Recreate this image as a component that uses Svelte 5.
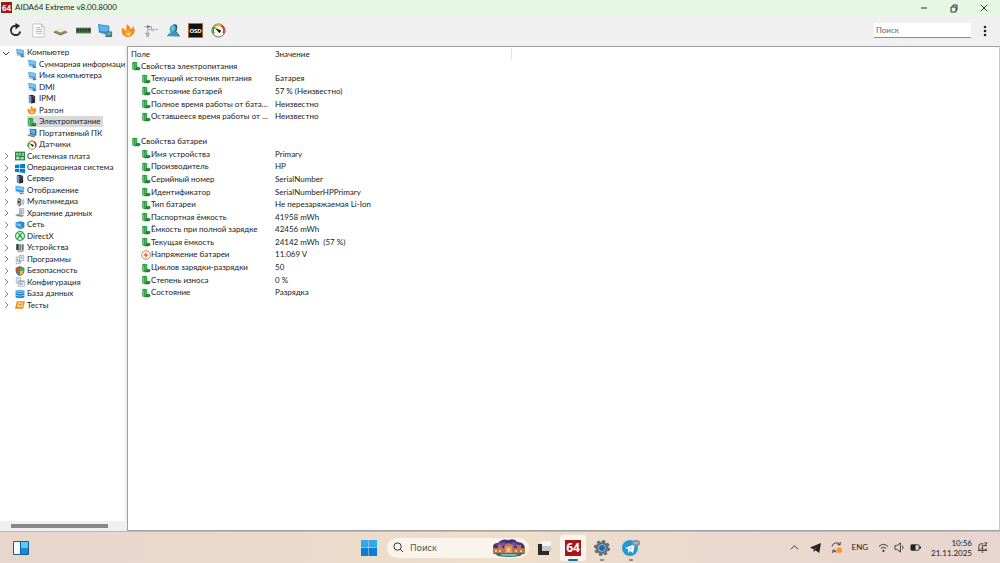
<script>
  const tree = [
    { icon: 'pc', label: 'Компьютер', level: 0, open: true },
    { icon: 'pc', label: 'Суммарная информаци', level: 1 },
    { icon: 'pc', label: 'Имя компьютера', level: 1 },
    { icon: 'pc', label: 'DMI', level: 1 },
    { icon: 'server', label: 'IPMI', level: 1 },
    { icon: 'flame', label: 'Разгон', level: 1 },
    { icon: 'battery', label: 'Электропитание', level: 1, selected: true },
    { icon: 'laptop', label: 'Портативный ПК', level: 1 },
    { icon: 'gauge', label: 'Датчики', level: 1 },
    { icon: 'board', label: 'Системная плата', level: 0 },
    { icon: 'windows', label: 'Операционная система', level: 0 },
    { icon: 'server', label: 'Сервер', level: 0 },
    { icon: 'display', label: 'Отображение', level: 0 },
    { icon: 'sound', label: 'Мультимедиа', level: 0 },
    { icon: 'disk', label: 'Хранение данных', level: 0 },
    { icon: 'network', label: 'Сеть', level: 0 },
    { icon: 'directx', label: 'DirectX', level: 0 },
    { icon: 'devices', label: 'Устройства', level: 0 },
    { icon: 'programs', label: 'Программы', level: 0 },
    { icon: 'shield', label: 'Безопасность', level: 0 },
    { icon: 'config', label: 'Конфигурация', level: 0 },
    { icon: 'database', label: 'База данных', level: 0 },
    { icon: 'tests', label: 'Тесты', level: 0 }
  ];

  const rows = [
    { group: 'Свойства электропитания' },
    { name: 'Текущий источник питания', value: 'Батарея' },
    { name: 'Состояние батарей', value: '57 % (Неизвестно)' },
    { name: 'Полное время работы от бата...', value: 'Неизвестно' },
    { name: 'Оставшееся время работы от ...', value: 'Неизвестно' },
    { blank: true },
    { group: 'Свойства батареи' },
    { name: 'Имя устройства', value: 'Primary' },
    { name: 'Производитель', value: 'HP' },
    { name: 'Серийный номер', value: 'SerialNumber' },
    { name: 'Идентификатор', value: 'SerialNumberHPPrimary' },
    { name: 'Тип батареи', value: 'Не перезаряжаемая Li-Ion' },
    { name: 'Паспортная ёмкость', value: '41958 mWh' },
    { name: 'Ёмкость при полной зарядке', value: '42456 mWh' },
    { name: 'Текущая ёмкость', value: '24142 mWh\u00a0 (57 %)' },
    { name: 'Напряжение батареи', value: '11.069 V', icon: 'volt' },
    { name: 'Циклов зарядки-разрядки', value: '50' },
    { name: 'Степень износа', value: '0 %' },
    { name: 'Состояние', value: 'Разрядка' }
  ];

  const tools = [
    { icon: 'refresh', label: 'Обновить' },
    { icon: 'report', label: 'Отчёт' },
    { icon: 'chip', label: 'Процессор' },
    { icon: 'ram', label: 'Память' },
    { icon: 'remote', label: 'Монитор' },
    { icon: 'flame', label: 'Разгон' },
    { icon: 'prefs', label: 'Настройки' },
    { icon: 'user', label: 'Пользователь' },
    { icon: 'osd', label: 'Панель OSD' },
    { icon: 'gauge', label: 'Датчики' }
  ];

  let search = $state('');
  let query = $state('');
</script>

{#snippet icon(name)}
  <svg class="icon" viewBox="0 0 16 16" aria-hidden="true">
    {#if name === 'pc'}
      <path d="M2 1l12 2v9L3 10z" fill="#3b97da" />
      <path d="M3 2l10 2v5L4 8z" fill="#7cc4f2" />
      <path d="M0 11l5-1 8 2-3 2z" fill="#b9c6cf" />
      <path d="M9 11l6 1v2l-5 1z" fill="#3c7fb5" />
    {:else if name === 'laptop'}
      <path d="M4 1l11 1v10L5 10z" fill="#1b5fa8" />
      <path d="M5 2l8 1v7L6 8z" fill="#5cb6f0" />
      <path d="M1 11l4-2 10 2-3 3z" fill="#8a949c" />
      <path d="M1 11l11 3v1L1 12z" fill="#39434b" />
    {:else if name === 'display'}
      <path d="M1 1l13 2v9L1 10z" fill="#2490df" />
      <path d="M2 2l11 2v5L2 7z" fill="#79caf7" />
      <path d="M6 12l5 0 4 2-6 1z" fill="#7a8c9c" />
    {:else if name === 'remote'}
      <path d="M0 1l12 2v10L1 10z" fill="#2f8fdc" />
      <path d="M1 2l10 2v6L2 8z" fill="#5db4ee" />
      <path d="M8 9h7v6H8z" fill="#4d7185" />
      <path d="M9 10h5v3H9z" fill="#62a9a1" />
    {:else if name === 'server'}
      <path d="M3 2l5-1 5 2v11l-6 1-4-2z" fill="#252a32" />
      <path d="M3 2l4 1v12l-4-2z" fill="#7998b8" />
      <path d="M9 4h3M9 6h3M9 8h3" stroke="#69717e" />
    {:else if name === 'flame'}
      <path d="M1 5c2 1 3 2 4 4 1-3 1-5 1-8 3 2 4 4 4 6l4-4c-1 3 0 4 1 4-1 6-4 8-8 8-5-1-7-4-6-10z" fill="#f28c1c" />
      <path d="M4 10c2 1 3-1 4-4 0 3 1 4 4 3-1 5-7 6-8 1z" fill="#ffb23a" />
      <path d="M6 12l2-2 2 2-2 2z" fill="#ffe083" />
    {:else if name === 'battery'}
      <path d="M2 2l3-1 5 1v12l-3 1-5-2z" fill="#2a9741" />
      <path d="M3 3l2 1v10l-2-1z" fill="#5fce6c" />
      <path d="M6 3h3v9H6z" fill="#45b858" />
      <path d="M8 10l5-1 2 2v2l-4 2-3-1z" fill="#286f38" />
      <path d="M10 10h3v2h-3z" fill="#45a552" />
    {:else if name === 'gauge'}
      <circle cx="8" cy="8" r="7" fill="#fffbea" stroke="#5b6652" stroke-width="1" />
      <path d="M3 11A6 6 0 0 1 4 4" stroke="#37a53a" stroke-width="2" fill="none" />
      <path d="M4 4a6 6 0 0 1 7-1" stroke="#e9b51d" stroke-width="2" fill="none" />
      <path d="M11 3a6 6 0 0 1 2 8" stroke="#d63b25" stroke-width="2" fill="none" />
      <path d="M4 5l7 3-2 3z" fill="#222" />
    {:else if name === 'board'}
      <path d="M0 1h16v14H0z" fill="#268a42" />
      <path d="M2 3h3v4H2zM6 3h3v4H6zM11 3h3v5h-3zM2 9h5v4H2zM9 10h5v3H9z" fill="#c4e8c8" />
      <path d="M3 4v2M7 4v2M12 4v3" stroke="#268a42" />
    {:else if name === 'windows'}
      <path d="M0 3l7-1v6H0zM8 2l8-1v7H8zM0 9h7v6l-7-1zM8 9h8v7l-8-1z" fill="#087bd0" />
    {:else if name === 'sound'}
      <path d="M4 3l3-2 3 3v8l-3 3-3-3z" fill="#575d61" />
      <ellipse cx="6" cy="8" rx="3" ry="5" fill="#b4b9bc" />
      <circle cx="6" cy="8" r="2" fill="#444" />
      <path d="M11 4q3 4 0 8M13 3q3 5 0 10" fill="none" stroke="#888" />
    {:else if name === 'disk'}
      <path d="M7 1h7v8H7z" fill="#d9dee1" stroke="#8c9499" />
      <path d="M0 11l5-2 10 2-3 3-9-1z" fill="#a4abb0" />
      <path d="M3 12l9 1M9 3l2 3-3 2" stroke="#566067" fill="none" />
    {:else if name === 'network'}
      <path d="M1 4l8-2 6 2v8l-7 2-7-3z" fill="#238ace" />
      <path d="M2 5l8 1v5l-8-2z" fill="#6bc2f1" />
      <path d="M5 13l7-2 2 2-7 2z" fill="#7b929d" />
    {:else if name === 'directx'}
      <circle cx="8" cy="8" r="7" fill="white" stroke="#20a23c" stroke-width="2" />
      <path d="M4 13Q5 9 8 7q3 2 4 6M4 4q3 0 4 3 1-3 4-3" stroke="#20a23c" stroke-width="2" fill="none" />
    {:else if name === 'devices'}
      <path d="M2 2l4-1v11l-4-1z" fill="#333b40" />
      <path d="M7 2h3v9H7zM11 2h3v9h-3z" fill="#6c757a" />
      <path d="M3 12l10-1 1 3-8 1z" fill="#a8afb3" />
    {:else if name === 'programs'}
      <path d="M2 5h7v10H2z" fill="#fff" stroke="#718fa5" />
      <path d="M7 2h7v9H7z" fill="#e9f3f9" stroke="#7494aa" />
      <path d="M3 7h2v5H3z" fill="#e7ad23" />
      <path d="M6 9h2v4H6z" fill="#3b97d3" />
      <path d="M9 5h3M9 7h3" stroke="#52809b" />
    {:else if name === 'shield'}
      <path d="M8 0l7 3v5q-1 6-7 8-6-2-7-8V3z" fill="#546068" />
      <path d="M2 4l6-3v7H2z" fill="#e24b2e" />
      <path d="M8 1l6 3v4H8z" fill="#4faf45" />
      <path d="M2 8h6v7q-5-2-6-7z" fill="#288bd5" />
      <path d="M8 8h6q-1 5-6 7z" fill="#f5be30" />
    {:else if name === 'config'}
      <path d="M2 1h7v9H2zM5 6h10v9H5z" fill="#eaf0f3" stroke="#93a2ac" />
      <path d="M5 6h10v2H5z" fill="#99afbf" />
      <path d="M7 10h6M7 12h5M4 3h3" stroke="#879eaf" />
    {:else if name === 'database'}
      <path d="M1 3q7-3 14 0v10q-7 3-14 0z" fill="#1681cf" />
      <ellipse cx="8" cy="3" rx="7" ry="2" fill="#65baf0" />
      <path d="M1 6q7 3 14 0M1 10q7 3 14 0" stroke="#def1fb" stroke-width="1" fill="none" />
    {:else if name === 'tests'}
      <path d="M3 2h13l-3 12H0z" fill="#e89218" />
      <path d="M5 4h8l-1 7H4z" fill="#ffe0a3" />
      <path d="M6 9l2-3 1 3 2-4" stroke="#bd650b" fill="none" />
    {:else if name === 'volt'}
      <circle cx="8" cy="8" r="7" fill="#fff4eb" stroke="#a9532f" stroke-width="1" />
      <path d="M10 2L4 9h4l-2 5 6-7H8z" fill="#df5824" />
    {:else if name === 'refresh'}
      <path d="M9 3A5 5 0 1 0 13 9" fill="none" stroke="#252525" stroke-width="2" />
      <path d="M8 0l5 3-5 4z" fill="#252525" />
    {:else if name === 'report'}
      <path d="M2 1h9l3 3v11H2z" fill="#fff" stroke="#bfc2c4" />
      <path d="M11 1v3h3M5 5h5M5 7h7M5 9h7M5 11h7" fill="none" stroke="#b3b7ba" />
    {:else if name === 'chip'}
      <path d="M1 9l7 3 7-3v1l-7 3-7-3z" fill="#514d30" />
      <path d="M1 9l7-3 7 3-7 3z" fill="#8f8b65" />
      <path d="M3 8l5-2 5 2-5 2z" fill="#eeeede" />
    {:else if name === 'ram'}
      <path d="M0 5h16v6H0z" fill="#47704c" />
      <path d="M1 6h2v3H1zM4 6h2v3H4zM7 6h2v3H7zM10 6h2v3h-2zM13 6h2v3h-2z" fill="#263a2b" />
      <path d="M1 11h14" stroke="#b5ac68" stroke-dasharray="1 1" />
    {:else if name === 'prefs'}
      <path d="M5 2v13M1 4h8M5 7h11M9 3v5M2 11h5" stroke="#a1acb5" fill="none" />
      <path d="M4 3h3v2H4z" fill="#4a7e9d" />
      <path d="M10 6h2v3h-2z" fill="#bdc4c9" />
      <path d="M4 11h2v3H4z" fill="#d4dade" stroke="#8e9aa4" />
    {:else if name === 'user'}
      <path d="M7 2q5-2 5 3l-1 4 4 5H8z" fill="#1b4a66" />
      <path d="M4 7q0-4 3-5t4 3l-1 4 3 3v2H1q1-3 4-4z" fill="#359cba" />
      <path d="M6 4q3-2 3 1t-3 4z" fill="#78c6d8" />
    {:else if name === 'osd'}
      <path d="M0 0h16v16H0z" fill="#15100e" stroke="#b9702a" stroke-width="2" />
      <text x="8" y="11" text-anchor="middle" font-size="6" font-weight="800" fill="#fff">OSD</text>
    {/if}
  </svg>
{/snippet}

<div class="desktop">
  <header class="titlebar">
    <span class="logo">64</span>
    <h1>AIDA64 Extreme v8.00.8000</h1>
    <div class="window-buttons">
      <button aria-label="Свернуть"><svg viewBox="0 0 10 10"><path d="M2 5h6" /></svg></button>
      <button aria-label="Восстановить"><svg viewBox="0 0 10 10"><path d="M2 4h5v5H2zM4 4V2h4v5H7" /></svg></button>
      <button aria-label="Закрыть"><svg viewBox="0 0 10 10"><path d="M2 2l6 6M8 2L2 8" /></svg></button>
    </div>
  </header>

  <div class="toolbar">
    <div class="tools">
      {#each tools as tool}
        <button aria-label={tool.label}>{@render icon(tool.icon)}</button>
      {/each}
    </div>
    <input type="search" placeholder="Поиск" aria-label="Поиск" bind:value={search} />
    <button class="more" aria-label="Меню">
      <svg viewBox="0 0 4 12"><circle cx="2" cy="2" r="1.300" /><circle cx="2" cy="6" r="1.300" /><circle cx="2" cy="10" r="1.300" /></svg>
    </button>
  </div>

  <main>
    <nav aria-label="Разделы">
      <ul>
        {#each tree as item}
          <li class:child={item.level === 1}>
            <button class="node" class:selected={item.selected}>
              {#if item.level === 0}
                <svg class="chevron" class:open={item.open} viewBox="0 0 8 8" aria-hidden="true"><path d="M3 1l3 3-3 3" /></svg>
              {/if}
              {@render icon(item.icon)}
              <span>{item.label}</span>
            </button>
          </li>
        {/each}
      </ul>
      <div class="scrollbar"><div class="thumb"></div></div>
    </nav>

    <section>
      <table>
        <colgroup><col class="field-col" /><col class="value-col" /><col /></colgroup>
        <thead>
          <tr><th scope="col">Поле</th><th scope="col">Значение</th><td></td></tr>
        </thead>
        <tbody>
          {#each rows as row}
            <tr>
              {#if row.blank}
                <td colspan="3"></td>
              {:else if row.group}
                <th scope="rowgroup" colspan="3"><div class="cell">{@render icon('battery')}{row.group}</div></th>
              {:else}
                <td><div class="cell indent">{@render icon(row.icon ?? 'battery')}{row.name}</div></td>
                <td>{row.value}</td>
                <td></td>
              {/if}
            </tr>
          {/each}
        </tbody>
      </table>
    </section>
  </main>

  <footer>
    <div class="left">
      <button aria-label="Мини-приложения">
        <svg class="widgets" viewBox="0 0 16 16"><rect x="0" y="1" width="16" height="14" rx="1" fill="#155e9c" /><path d="M1 2h6v12H1z" fill="#f5fbff" /><path d="M8 2h7v6H8z" fill="#55cdf8" /><path d="M8 8h7v6H8z" fill="#168bd8" /></svg>
      </button>
    </div>
    <div class="apps">
      <button aria-label="Пуск">
        <svg class="start" viewBox="0 0 16 16"><path d="M0 0h7.500v7.500H0zM8 0h8v7.500H8z" fill="#2ea9ec" /><path d="M0 8h7.500v8H0zM8 8h8v8H8z" fill="#0b7dd4" /></svg>
      </button>
      <div class="search">
        <svg class="lens" viewBox="0 0 12 12"><circle cx="5" cy="5" r="4" /><path d="M8 8l3 3" /></svg>
        <input type="text" placeholder="Поиск" aria-label="Поиск в системе" bind:value={query} />
        <svg class="scene" viewBox="0 0 34 18" aria-hidden="true">
          <path d="M1 8q0-4 5-4 4-5 10-3 7-2 9 2 8 0 8 7L32 13H2z" fill="#49306f" />
          <path d="M4 6q5-4 9-2t9-1l6 4-10 1z" fill="#76519a" />
          <path d="M1 9h5V6h4v3h2l1-3 3-2 5 2 1 3h3V6h4v3h4v6H1z" fill="#ba7554" />
          <path d="M13 7h7v7h-7z" fill="#d9966a" />
          <path d="M3 11h2v2H3zM7 11h2v2H7zM15 9h3v4h-3zM23 11h2v2h-2zM28 11h2v2h-2z" fill="#f3cd74" />
          <path d="M2 14h30l-4 3q-11 2-22 0z" fill="#38716c" />
          <path d="M8 15h18l-3 2H11z" fill="#70b6c5" />
        </svg>
      </div>
      <button aria-label="Представление задач">
        <svg class="start" viewBox="0 0 16 16"><path d="M5 1h10v11H5z" fill="#c6c9cb" /><path d="M5 1h10v5H5z" fill="#f3f3f3" /><path d="M2 4h4v7h7v4H2z" fill="#292929" /></svg>
      </button>
      <button class="app active" aria-label="AIDA64"><span class="logo large">64</span></button>
      <button class="app running" aria-label="Параметры">
        <svg class="start" viewBox="0 0 16 16"><circle cx="8" cy="8" r="7" fill="none" stroke="#58636c" stroke-width="2" stroke-dasharray="3 2.500" /><circle cx="8" cy="8" r="5" fill="#dce5ed" stroke="#65717c" stroke-width="3" /><circle cx="8" cy="8" r="3" fill="#176dba" /></svg>
      </button>
      <button class="app running" aria-label="Telegram">
        <svg class="telegram" viewBox="0 0 18 16"><circle cx="8" cy="8" r="8" fill="#209bd9" /><path d="M3 8l10-4-2 9-3-2-2 2V9z" fill="#fff" /><path d="M7 9l4-3-3 4z" fill="#8fc9e9" /><rect x="10" y="0" width="8" height="6" rx="3" fill="#8c9297" /><path d="M12 3h4" stroke="#d7dbdd" /></svg>
      </button>
    </div>
    <div class="tray">
      <button aria-label="Скрытые значки"><svg class="small" viewBox="0 0 12 12"><path d="M2 8l4-4 4 4" /></svg></button>
      <button aria-label="Сообщения"><svg class="small" viewBox="0 0 12 12"><path d="M0 6l12-5-2 11-4-3-2 2V8z" fill="#202020" stroke="none" /><path d="M4 8l5-4-4 4z" fill="#b5a7a0" stroke="none" /></svg></button>
      <button aria-label="Обновление"><svg class="small" viewBox="0 0 12 12"><path d="M1 5a5 5 0 0 1 9-2M10 0v3H7M2 12V9h3M3 10l3 1" /><circle cx="9" cy="9" r="3" fill="#f49b22" stroke="none" /></svg></button>
      <button class="lang">ENG</button>
      <button class="status" aria-label="Сеть, звук и батарея">
        <svg class="small" viewBox="0 0 12 12"><path d="M1 5q5-5 10 0M3 7q3-3 6 0M5 9q1-1 2 0" /><circle cx="6" cy="10" r="1" fill="#333" stroke="none" /></svg>
        <svg class="small" viewBox="0 0 12 12"><path d="M1 4h2l4-3v10L3 8H1zM9 4q2 2 0 4" /></svg>
        <svg class="small" viewBox="0 0 12 12"><rect x="1" y="3" width="9" height="6" rx="1" /><path d="M1 3h5v6H1zM10 5h2v2h-2z" fill="#222" stroke="none" /></svg>
      </button>
      <button class="clock"><time>10:56</time><span>21.11.2025</span></button>
      <button aria-label="Уведомления"><svg class="small" viewBox="0 0 12 12"><path d="M7 2H4Q2 2 2 5v4h8V7M1 9h10M5 11h2M5 4h2L5 7h2M8 1h3L8 4h3" /></svg></button>
    </div>
  </footer>
</div>

<style>
  :global(body) { margin: 0; }
  * { box-sizing: border-box; }
  button, input { font: inherit; color: inherit; border: 0; padding: 0; background: none; }
  button { display: flex; align-items: center; justify-content: center; }
  svg { display: block; flex: none; }

  .desktop {
    display: flex;
    flex-direction: column;
    min-height: 100vh;
    background: #f0f0f0;
    color: #222;
    font: 8px/11px Lato, "Noto Sans", sans-serif;
  }
  .icon { width: 10px; height: 10px; }

  .titlebar { display: flex; align-items: center; gap: 3px; height: 15px; padding-right: 1px; background: #e6f7e4; }
  .logo {
    display: grid;
    place-items: center;
    width: 11px;
    height: 11px;
    margin-left: 1px;
    background: #a3161b;
    color: #fff;
    font-family: "Open Sans", sans-serif;
    font-size: 8px;
    font-weight: 700;
  }
  .logo.large { width: 16px; height: 16px; margin: 0; font-size: 12px; }
  h1 { flex: 1; margin: 0; font-size: 8px; font-weight: 400; }
  .window-buttons { display: flex; }
  .window-buttons button { width: 30px; height: 15px; }
  .window-buttons svg { width: 10px; height: 10px; fill: none; stroke: #333; }

  .toolbar { display: flex; align-items: center; height: 31px; padding: 0 9px 0 4px; }
  .tools { display: flex; flex: 1; }
  .tools button { width: 23px; height: 22px; }
  .tools button:nth-child(2n) { width: 22px; }
  .tools .icon { width: 15px; height: 15px; }
  .toolbar input {
    width: 97px;
    height: 15px;
    padding: 0 2px;
    background: #fff;
    border-bottom: 1px solid #8c8c8c;
  }
  .toolbar input::placeholder { color: #666; opacity: 1; }
  .more { width: 12px; height: 18px; margin-left: 8px; }
  .more svg { width: 4px; height: 12px; fill: #222; }

  main { display: flex; flex: 1; }
  nav { display: flex; flex-direction: column; width: 125px; background: #fff; }
  ul { display: grid; grid-auto-rows: 1fr; height: 264px; margin: 1px 0 auto; padding: 0; list-style: none; overflow: hidden; }
  li { display: flex; align-items: center; min-height: 0; padding-left: 2px; overflow: hidden; }
  li.child { padding-left: 27px; }
  .node { gap: 2px; height: 11px; white-space: nowrap; }
  .node span { padding-right: 2px; }
  .selected { background: #d9d9d9; }
  .chevron { width: 8px; height: 8px; margin-right: 3px; fill: none; stroke: #888; }
  .chevron.open { transform: rotate(90deg); stroke: #333; }
  .scrollbar { height: 10px; padding: 3px 17px 3px 11px; background: #f0f0f0; }
  .thumb { height: 4px; background: #888; }

  section { flex: 1; margin-left: 2px; background: #fff; border: 1px solid #a0a0a0; border-right-color: #c8c8c8; }
  table { width: 100%; height: 251px; margin-top: 1px; table-layout: fixed; border-collapse: collapse; }
  .field-col { width: 144px; }
  .value-col { width: 239px; }
  th, td { height: 12px; padding: 0 3px; text-align: left; font-weight: 400; white-space: nowrap; vertical-align: middle; }
  thead th:nth-child(2) { border-right: 1px solid #e2e2e2; }
  .cell { display: flex; align-items: center; }
  .indent { padding-left: 10px; }

  footer {
    display: grid;
    grid-template-columns: 1fr auto 1fr;
    align-items: center;
    height: 32px;
    border-top: 1px solid #c4b8b0;
    background: linear-gradient(90deg, #e7d6cc, #eadacc 30%, #efdfca 50%, #ead9ce 70%, #e8d5cf);
  }
  .left { display: flex; padding-left: 13px; }
  .widgets, .start { width: 16px; height: 16px; }
  .apps { display: flex; align-items: center; }
  .apps > button { width: 26px; height: 26px; }
  .search {
    display: flex;
    align-items: center;
    gap: 6px;
    width: 142px;
    height: 20px;
    margin: 0 2px 0 5px;
    padding: 0 3px 0 6px;
    border-radius: 10px;
    background: #faf4ed;
  }
  .search input { flex: 1; min-width: 0; font-family: "Noto Sans", sans-serif; font-size: 9px; }
  .search input::placeholder { color: #555; opacity: 1; }
  .lens { width: 11px; height: 11px; fill: none; stroke: #222; }
  .scene { width: 34px; height: 18px; }
  .telegram { width: 18px; height: 16px; }
  .apps > .app { position: relative; margin-left: 3px; border-radius: 3px; }
  .active { background: #fbf5ee; }
  .app::after { content: ""; position: absolute; bottom: 0; width: 4px; height: 2px; border-radius: 1px; background: #8a8078; }
  .active::after { width: 10px; background: #1769ae; }

  .tray { display: flex; align-items: center; justify-content: flex-end; gap: 10px; padding-right: 12px; }
  .small { width: 11px; height: 11px; fill: none; stroke: #333; }
  .status { gap: 5px; }
  .clock { flex-direction: column; align-items: flex-end; line-height: 10px; }
  .tray .clock + button { margin-left: -5px; }
</style>
